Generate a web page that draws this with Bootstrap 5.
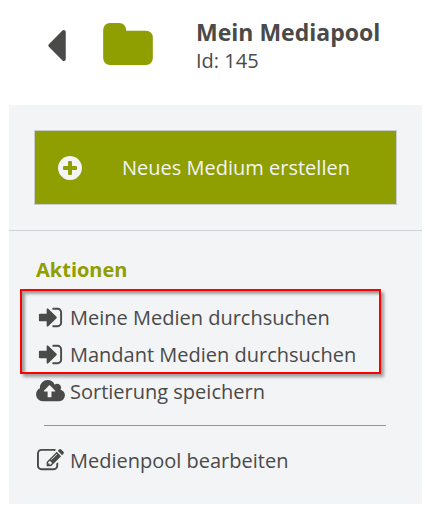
<!DOCTYPE html>
<html lang="de">
<head>
<meta charset="utf-8">
<meta name="viewport" content="width=device-width, initial-scale=1">
<title>Mein Mediapool</title>
<link href="https://cdn.jsdelivr.net/npm/bootstrap@5.3.0/dist/css/bootstrap.min.css" rel="stylesheet">
<style>
  body { font-family: "Open Sans", sans-serif; font-size: 20px; line-height: 28px; color: #4a4a49; background: #fff; }
  svg { display: block; fill: currentColor; flex: none; }
  .pool-head { padding: 17px 16px 0 48px; height: 105px; }
  .pool-title { font-size: 23px; line-height: 30px; font-weight: 700; }
  .pool-back { color: inherit; margin: 13px 37px 0 0; }
  .pool-folder { color: #8f9e00; margin: 6px 43px 0 0; }
  .pool-panel { background: #f3f4f6; margin: 0 3px 4px 9px; }
  .pool-create { padding: 25px; border-bottom: 1px solid #d0d3d6; }
  .btn-create { height: 75px; padding: 0 22px 0 23px; font-size: 20px; line-height: 28px;
    --bs-btn-color: #f3f4f6; --bs-btn-bg: #8f9e00; --bs-btn-border-color: #c9cdd3;
    --bs-btn-hover-color: #fff; --bs-btn-hover-bg: #7e8c00; --bs-btn-hover-border-color: #c9cdd3; }
  .pool-actions { padding: 25px 36px 29px 11px; }
  .actions-title { font-size: 20px; line-height: 28px; font-weight: 700; color: #8f9e00; margin: 0 16px 5px; }
  .found-group { border: 2px solid #f00; padding: 13px 14px 3px; margin: 0 5px 4px 0; gap: 9px;
    box-shadow: 3px 3px 3px rgba(0,0,0,.35), inset 3px 3px 3px rgba(0,0,0,.35); }
  .action-link { color: inherit; text-decoration: none; height: 28px; gap: 5px; white-space: nowrap; }
  .action-icon { width: 29px; flex: none; align-self: flex-start; }
  .action-single { padding: 0 16px; }
  .action-rule { margin: 19px 0 21px 24px; border-top: 1px solid #93979b; opacity: 1; }
</style>
</head>
<body>
<header class="pool-head d-flex align-items-start">
  <a class="pool-back" href="#" aria-label="Zurück">
    <svg width="18" height="31" viewBox="640 384 576 1024" aria-hidden="true"><path d="M1216 448v896q0 26-19 45t-45 19-45-19l-448-448q-19-19-19-45t19-45l448-448q19-19 45-19t45 19 19 45z"/></svg>
  </a>
  <svg class="pool-folder" width="50" height="42" viewBox="64 128 1664 1408" aria-hidden="true"><path d="M1728 608v704q0 92-66 158t-158 66h-1216q-92 0-158-66t-66-158v-960q0-92 66-158t158-66h320q92 0 158 66t66 158v32h672q92 0 158 66t66 158z"/></svg>
  <div class="text-nowrap">
    <h1 class="pool-title m-0">Mein Mediapool</h1>
    <div>Id: 145</div>
  </div>
</header>
<main class="pool-panel">
  <div class="pool-create">
    <button type="button" class="btn btn-create rounded-0 w-100 d-flex align-items-center">
      <svg width="24" height="24" viewBox="128 128 1536 1536" aria-hidden="true"><path d="M1344 960v-128q0-26-19-45t-45-19h-256v-256q0-26-19-45t-45-19h-128q-26 0-45 19t-19 45v256h-256q-26 0-45 19t-19 45v128q0 26 19 45t45 19h256v256q0 26 19 45t45 19h128q26 0 45-19t19-45v-256h256q26 0 45-19t19-45zm320-64q0 209-103 385.500t-279.500 279.500-385.500 103-385.500-103-279.500-279.500-103-385.500 103-385.500 279.500-279.500 385.500-103 385.500 103 279.500 279.500 103 385.500z"/></svg>
      <span class="flex-grow-1 text-center ps-3 text-nowrap">Neues Medium erstellen</span>
    </button>
  </div>
  <nav class="pool-actions" aria-labelledby="actions">
    <h2 class="actions-title" id="actions">Aktionen</h2>
    <div class="found-group d-flex flex-column">
      <a class="action-link d-flex align-items-center" href="#">
        <span class="action-icon d-flex justify-content-center"><svg width="27" height="27" viewBox="0 0 1792 1792" aria-hidden="true"><path id="enter" d="M1312 896q0 26-19 45l-544 544q-19 19-45 19t-45-19-19-45v-288h-448q-26 0-45-19t-19-45v-384q0-26 19-45t45-19h448v-288q0-26 19-45t45-19 45 19l544 544q19 19 19 45zm352-352v704q0 119-84.500 203.500t-203.500 84.500h-320q-13 0-22.500-9.500t-9.500-22.500q0-4-1-20t-.5-26.500 3-23.500 10-19.500 20.500-6.500h320q66 0 113-47t47-113v-704q0-66-47-113t-113-47h-312l-11.500-1-11.500-3-8-5.500-7-9-2-13.500q0-4-1-20t-.5-26.500 3-23.500 10-19.500 20.500-6.500h320q119 0 203.500 84.500t84.500 203.500z"/></svg></span>
        <span>Meine Medien durchsuchen</span>
      </a>
      <a class="action-link d-flex align-items-center" href="#">
        <span class="action-icon d-flex justify-content-center"><svg width="27" height="27" viewBox="0 0 1792 1792" aria-hidden="true"><use href="#enter"/></svg></span>
        <span>Mandant Medien durchsuchen</span>
      </a>
    </div>
    <div class="action-single">
      <a class="action-link d-flex align-items-center" href="#">
        <span class="action-icon d-flex justify-content-center"><svg width="29" height="27" viewBox="-64 0 1920 1792" aria-hidden="true"><path d="M1216 864q0-14-9-23l-352-352q-9-9-23-9t-23 9l-351 351q-10 12-10 24 0 14 9 23t23 9h224v352q0 13 9.500 22.500t22.500 9.500h192q13 0 22.500-9.500t9.500-22.500v-352h224q13 0 22.500-9.500t9.500-22.500zm640 288q0 159-112.500 271.500t-271.500 112.500h-1088q-185 0-316.500-131.500t-131.500-316.500q0-130 70-240t188-165q-2-30-2-43 0-212 150-362t362-150q156 0 285.500 87t188.500 231q71-62 166-62 106 0 181 75t75 181q0 76-41 138 130 31 213.500 135.500t83.500 238.500z"/></svg></span>
        <span>Sortierung speichern</span>
      </a>
    </div>
    <hr class="action-rule">
    <div class="action-single">
      <a class="action-link d-flex align-items-center" href="#">
        <span class="action-icon d-flex justify-content-center"><svg width="27" height="27" viewBox="0 0 1792 1792" aria-hidden="true"><path d="M888 1184l116-116-152-152-116 116v56h96v96h56zm440-720q-16-16-33 1l-350 350q-17 17-1 33t33-1l350-350q17-17 1-33zm80 594v190q0 119-84.500 203.500t-203.500 84.500h-832q-119 0-203.500-84.500t-84.500-203.500v-832q0-119 84.500-203.500t203.500-84.500h832q63 0 117 25 15 7 18 23 3 17-9 29l-49 49q-14 14-32 8-23-6-45-6h-832q-66 0-113 47t-47 113v832q0 66 47 113t113 47h832q66 0 113-47t47-113v-126q0-13 9-22l64-64q15-15 35-7t20 29zm-96-738l288 288-672 672h-288v-288zm444 132l-92 92-288-288 92-92q28-28 68-28t68 28l152 152q28 28 28 68t-28 68z"/></svg></span>
        <span>Medienpool bearbeiten</span>
      </a>
    </div>
  </nav>
</main>
<script src="https://cdn.jsdelivr.net/npm/bootstrap@5.3.0/dist/js/bootstrap.bundle.min.js"></script>
</body>
</html>
